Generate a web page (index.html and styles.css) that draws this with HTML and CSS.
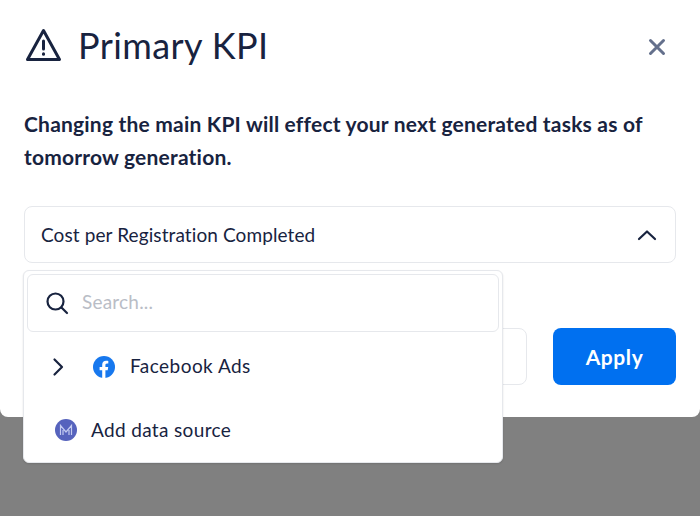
FILE: index.html
```html
<!DOCTYPE html>
<html lang="en">
<head>
<meta charset="utf-8">
<title>Primary KPI</title>
<link rel="stylesheet" href="styles.css">
</head>
<body>
<div class="modal">
  <header class="head">
    <svg class="warn" width="38" height="34" viewBox="0 0 38 34" fill="none" stroke="#18233f" stroke-width="3" stroke-linecap="round" stroke-linejoin="round"><path d="M19.500 2.500 35.500 31.500H3.500Z"/><path d="M19.500 13v8"/><path d="M19.500 25.800v.4"/></svg>
    <h1 class="title">Primary KPI</h1>
    <svg class="close" width="18" height="18" viewBox="0 0 18 18" fill="none" stroke="#64708c" stroke-width="3" stroke-linecap="round"><path d="M2.500 2.500 15.500 15.500M15.500 2.500 2.500 15.500"/></svg>
  </header>
  <p class="msg">Changing the main KPI will effect your next generated tasks as of tomorrow generation.</p>
  <div class="select">
    <span>Cost per Registration Completed</span>
    <svg width="20" height="12" viewBox="0 0 20 12" fill="none" stroke="#18233f" stroke-width="2.200" stroke-linecap="round" stroke-linejoin="round"><path d="M2 10 10 2.500 18 10"/></svg>
  </div>
  <div class="actions">
    <div class="cancel"></div>
    <button class="apply">Apply</button>
  </div>
  <div class="dropdown">
    <div class="search">
      <svg width="24" height="24" viewBox="0 0 24 24" fill="none" stroke="#18233f" stroke-width="2.200" stroke-linecap="round"><circle cx="10.500" cy="10.500" r="8"/><path d="M16.500 16.500 22 22"/></svg>
      <span class="ph">Search...</span>
    </div>
    <div class="row fb">
      <svg width="12" height="20" viewBox="0 0 12 20" fill="none" stroke="#18233f" stroke-width="2.200" stroke-linecap="round" stroke-linejoin="round"><path d="M2.500 2.500 10 10 2.500 17.500"/></svg>
      <svg class="logo" width="22" height="22" viewBox="0 0 22 22"><circle cx="11" cy="11" r="11" fill="#1778ee"/><path d="M9.200 22v-7.800H6.600V11h2.600V8.700c0-2.600 1.500-4 3.900-4 1.100 0 2.200.2 2.200.2v2.500h-1.300c-1.200 0-1.600.8-1.600 1.600V11h2.800l-.5 3.200h-2.300V22Z" fill="#fff"/></svg>
      <span class="fb-label">Facebook Ads</span>
    </div>
    <div class="row add">
      <svg width="22" height="22" viewBox="0 0 22 22"><circle cx="11" cy="11" r="11" fill="#5663bd"/><path d="M5.500 16V6.500L11 13l5.500-6.500V16M8 16V11M14 16V11" fill="none" stroke="#c4cbf0" stroke-width="1.200"/></svg>
      <span class="add-label">Add data source</span>
    </div>
  </div>
</div>
</body>
</html>
```
FILE: styles.css
```css
* { box-sizing: border-box; }
html, body { margin: 0; height: 516px; overflow: hidden; }
body { background: #808080; font-family: "Lato", "Liberation Sans", sans-serif; color: #18233f; }
.modal { position: relative; background: #fff; height: 417px; padding: 25px 24px 0; border-radius: 0 0 8px 8px; }
.head { display: flex; align-items: center; height: 40px; }
.warn { margin-right: 16px; flex: none; }
.title { margin: 0; flex: 1; font-size: 36px; line-height: 40px; font-weight: 400; letter-spacing: .4px; }
.close { margin-right: 10px; margin-top: 4px; }
.msg { margin: 42px 0 0; font-size: 21px; line-height: 33px; font-weight: 700; letter-spacing: .2px; width: 640px; }
.select { margin-top: 33px; height: 57px; border: 1px solid #e6e8ec; border-radius: 8px; padding: 0 18px 0 16px; display: flex; align-items: center; justify-content: space-between; font-size: 19px; letter-spacing: .1px; }
.actions { margin-top: 65px; display: flex; justify-content: flex-end; gap: 26px; }
.cancel { width: 123px; height: 57px; border: 1px solid #e6e8ec; border-radius: 8px; }
.apply { width: 123px; height: 57px; border: 0; border-radius: 8px; background: #0070f0; color: #fff; font: 700 21px "Lato", "Liberation Sans", sans-serif; letter-spacing: .6px; }
.dropdown { position: absolute; left: 23px; top: 270px; width: 480px; height: 193px; background: #fff; border: 1px solid #e6e8ec; border-radius: 6px; padding: 3px; box-shadow: 0 1px 2px rgba(0,0,0,.12); }
.search { height: 58px; border: 1px solid #e6e8ec; border-radius: 6px; display: flex; align-items: center; gap: 13px; padding: 0 17px; font-size: 19px; }
.ph { color: #b9bdc6; letter-spacing: .2px; margin-bottom: 4px; }
.row { display: flex; align-items: center; font-size: 19px; }
.fb { margin-top: 7px; height: 56px; padding-left: 25px; }
.logo { margin: 0 15px 0 29px; }
.fb-label { letter-spacing: .45px; margin-bottom: 4px; }
.add { margin-top: 7px; height: 56px; padding-left: 28px; gap: 14px; }
.add-label { letter-spacing: .35px; margin-bottom: 2px; }
```
